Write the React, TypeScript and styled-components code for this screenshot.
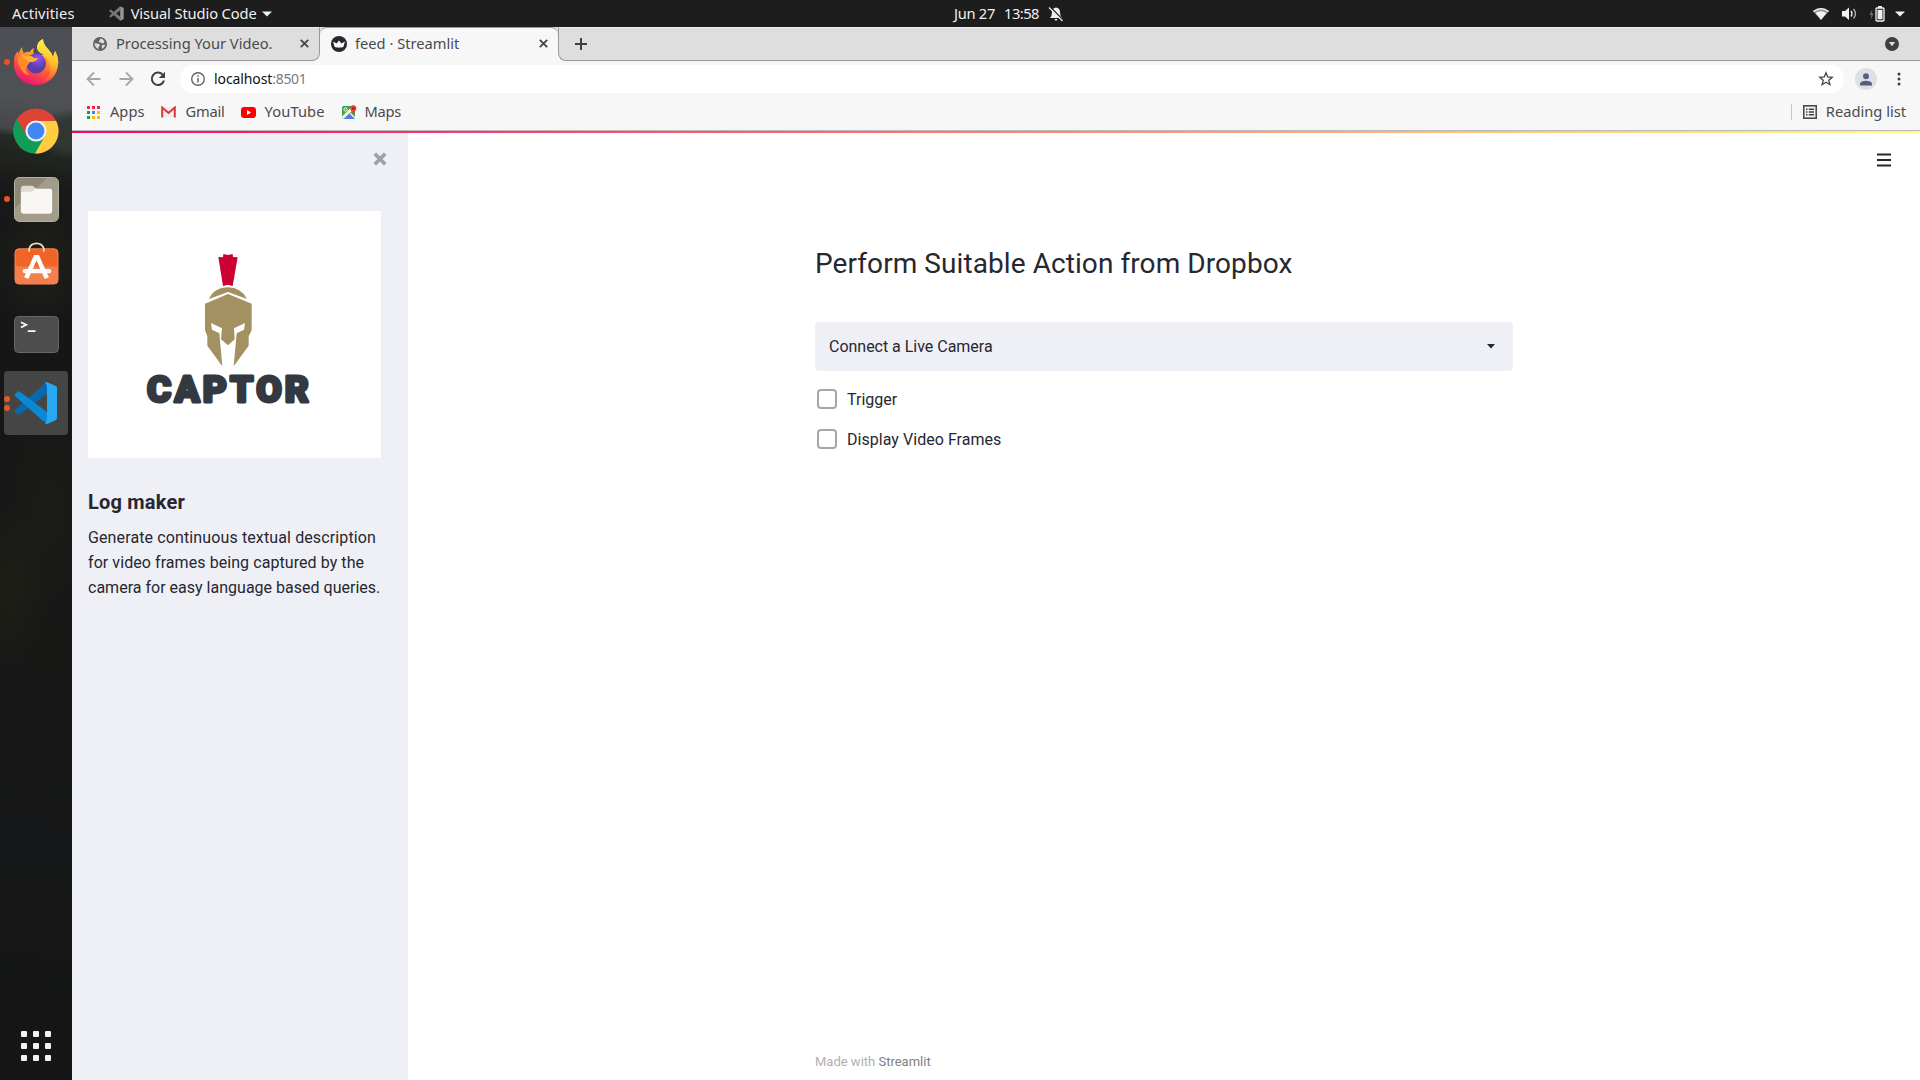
import React from "react";
import styled, { createGlobalStyle } from "styled-components";

const ubuntu = `"Noto Sans", "Open Sans", sans-serif`;
const plex = `Roboto, "Noto Sans", sans-serif`;

const Global = createGlobalStyle`
  * { box-sizing: border-box; }
  html, body { margin: 0; padding: 0; overflow: hidden; }
  svg { display: block; flex: none; }
`;

const Desktop = styled.div`
  width: 1920px; height: 1080px; display: flex; flex-direction: column;
  background: #1d1d1d; font-family: ${ubuntu}; font-size: 14.67px;
`;
const Label = styled.span<{ $ls?: number; $gap?: number }>`
  letter-spacing: ${(p) => p.$ls ?? 0}px;
  margin-left: ${(p) => p.$gap ?? 0}px;
  white-space: pre;
`;
const Spacer = styled.div`flex: 1;`;

/* ---- system bar ---- */
const TopBar = styled.header`
  height: 27px; flex: none; display: grid; grid-template-columns: 954px 1fr auto; align-items: center;
  background: #1d1d1d; color: #f0f0f0; line-height: 27px;
`;
const TopLeft = styled.div`display: flex; align-items: center; padding-left: 12px;`;
const TopCenter = styled.div`display: flex; align-items: center;`;
const TopRight = styled.div`display: flex; align-items: center; padding-right: 15px;`;
const TopIcon = styled.div<{ $gap: number }>`margin-left: ${(p) => p.$gap}px;`;

const Body = styled.div`flex: 1; display: flex; min-height: 0;`;

/* ---- dock ---- */
const Dock = styled.nav`
  width: 72px; flex: none; display: flex; flex-direction: column; align-items: stretch;
  background:
    radial-gradient(ellipse 40px 26px at 74px 107px, #303730 0 55%, transparent 100%),
    radial-gradient(ellipse 50px 60px at 40px 240px, rgba(40, 42, 28, .55), transparent),
    radial-gradient(ellipse 40px 90px at 10px 560px, rgba(34, 36, 22, .6), transparent),
    radial-gradient(ellipse 50px 120px at 50px 480px, rgba(32, 34, 22, .5), transparent),
    linear-gradient(187deg, #4b4e54 0, #505154 75px, #46474a 108px, #242a25 116px, #20231f 138px, #191919 165px, #161616 250px, #171716 600px, #171819 760px, #151515 100%);
`;
const DockItem = styled.div<{ $h: number }>`
  height: ${(p) => p.$h}px; flex: none; display: grid; grid-template-columns: 4px 6px 1fr 4px; align-items: center;
  & > svg { justify-self: center; margin-right: 6px; }
`;
const Running = styled.span`display: flex; flex-direction: column; gap: 3px; grid-column: 2; width: 6px; align-self: center;`;
const Dot = styled.i`width: 6px; height: 6px; border-radius: 50%; background: #e95420;`;
const ActiveTile = styled.div`
  width: 64px; height: 64px; margin: -4px 4px 0; flex: none; border-radius: 4px; background: #454545;
  display: flex; align-items: center;
  & > svg { margin-left: 4px; }
`;
const AppGrid = styled.div`
  margin: auto 0 19px 21px; display: grid; grid-template-columns: repeat(3, 6px); gap: 6px;
  & > i { width: 6px; height: 6px; border-radius: 1px; background: #f1f1ef; }
`;

/* ---- browser ---- */
const Browser = styled.section`flex: 1; display: flex; flex-direction: column; background: #fff; color: #3c4043;`;
const TabStrip = styled.div`
  height: 34px; flex: none; display: flex; align-items: stretch; background: #f7f7f7; color: #494b4d; line-height: 28px;
  & span { padding-bottom: 2px; }
`;
const StripBack = styled.div<{ $w?: number; $side: "left" | "right" }>`
  ${(p) => (p.$w ? `width: ${p.$w}px;` : "flex: 1;")}
  display: flex; align-items: center; background: #dedede; border-bottom: 1px solid #999; border-top: 1px solid #ececec;
  ${(p) => (p.$side === "left" ? "border-bottom-right-radius: 8px; border-right: 1px solid #999; padding: 0 10px 1px 21px;" : "border-bottom-left-radius: 8px; border-left: 1px solid #999; padding: 0 21px 0 16px;")}
`;
const ActiveTab = styled.div`
  width: 238px; display: flex; align-items: center; background: #f7f7f7; border-top: 1px solid #999; padding: 0 10px 2px 11px;
  border-radius: 7px 7px 0 0;
`;
const StripCorner = styled.div`display: flex; background: #f7f7f7;`;
const TabWell = styled.div`display: flex; background: linear-gradient(#dedede 0 50%, #f7f7f7 50%);`;
const Toolbar = styled.div`
  height: 36px; flex: none; display: flex; align-items: center; background: #f7f7f7; padding: 0 19px 0 14px;
`;
const ToolIcons = styled.div`display: flex; gap: 16px; align-items: center; width: 80px;`;
const Address = styled.div`
  flex: 1; height: 28px; margin-left: 14px; border-radius: 14px; background: #fff; display: flex; align-items: center;
  padding: 0 10px 0 11px; font-size: 14px; line-height: 28px; color: #777b80;
  & b { font-weight: 400; color: #111; }
`;
const Avatar = styled.div`
  width: 22px; height: 22px; margin-left: 11px; border-radius: 50%; background: #dee0e6; display: flex; align-items: center; justify-content: center;
`;
const Bookmarks = styled.div`
  height: 34px; flex: none; display: flex; align-items: center; background: #f7f7f7; border-bottom: 1px solid #b9b9b9;
  padding: 0 14px 3px 15px; color: #494b4d; line-height: 28px;
  & > span { padding-bottom: 2px; }
`;
const Rule = styled.div`width: 1px; height: 16px; background: #c5c5c5; margin-right: 11px;`;
const Decoration = styled.div`height: 2px; flex: none; background: linear-gradient(90deg, #ff0068, #fffd80);`;

/* ---- page ---- */
const Page = styled.div`flex: 1; display: flex; min-height: 0; font-family: ${plex}; font-size: 16px; color: #262730;`;
const Sidebar = styled.aside`width: 336px; flex: none; background: #eff0f6; padding: 19px 27px 0 16px; display: flex; flex-direction: column;`;
const CloseRow = styled.div`height: 59px; display: flex; justify-content: flex-end; margin-right: -6px;`;
const LogoCard = styled.div`width: 293px; height: 247px; background: #fff;`;
const SideTitle = styled.h2`margin: 30px 0 0; font-size: 20px; line-height: 28px; font-weight: 700; letter-spacing: .2px;`;
const SideText = styled.p`margin: 9px 0 0; line-height: 25px;`;
const Line = styled.span<{ $ls: number }>`display: block; white-space: nowrap; letter-spacing: ${(p) => p.$ls}px;`;
const Main = styled.main`flex: 1; display: grid; grid-template-columns: 407px 698px 1fr;`;
const Content = styled.div`grid-column: 2; display: flex; flex-direction: column; padding-top: 111px;`;
const Heading = styled.h1`margin: 0; font-size: 28px; line-height: 40px; font-weight: 400; letter-spacing: .08px;`;
const Select = styled.div`
  height: 49px; margin: 38px 0 8px; border-radius: 4px; background: #eff0f6; display: flex; align-items: center; justify-content: space-between;
  padding: 0 18px 0 14px;
`;
const Check = styled.label`height: 40px; display: flex; align-items: center; gap: 10px; padding-left: 2px;`;
const Box = styled.span`width: 20px; height: 20px; border: 2px solid #a5a5aa; border-radius: 4px; background: #fff;`;
const Footer = styled.footer`margin-top: auto; height: 37px; line-height: 38px; font-size: 13px; color: #b0b0b3; & b { font-weight: 400; color: #7e7e83; }`;
const MenuCell = styled.div`display: flex; justify-content: flex-end; padding: 20px 29px 0 0;`;

const VSGlyph = ({ size, gray }: { size: number; gray?: boolean }) => (
  <svg width={size} height={size} viewBox="0 0 44 44">
    <path d="M1 31 L4 33.500 Q5 34 6 33.200 L33 13 V2 L29 4 L1.500 28.500 Q.3 30 1 31Z" fill={gray ? "#777" : "#0868ae"} />
    <path d="M1 13 L4 10.500 Q5 10 6 10.800 L33 31 V42 L29 40 L1.500 15.500 Q.3 14 1 13Z" fill={gray ? "#777" : "#0b88d4"} />
    <path d="M31 1.500 Q32 .8 33 1.300 L42 5 Q43 5.500 43 7 V37 Q43 38.500 42 39 L33 43 Q32 43.400 31 42.500 Q33 41 33 38 V6 Q33 3 31 1.500Z" fill={gray ? "#999" : "#29a8f2"} />
  </svg>
);
const Firefox = () => (
  <svg width="46" height="48" viewBox="0 0 46 48">
    <defs>
      <linearGradient id="ff1" x1=".75" y1="0" x2=".3" y2="1"><stop offset="0" stopColor="#fff44f" /><stop offset=".32" stopColor="#ffb52b" /><stop offset=".62" stopColor="#ff5a36" /><stop offset="1" stopColor="#e9107a" /></linearGradient>
      <linearGradient id="ff3" x1=".7" y1="0" x2=".6" y2="1"><stop offset="0" stopColor="#fff550" /><stop offset=".55" stopColor="#ffc22c" /><stop offset="1" stopColor="#ff5636" /></linearGradient>
      <radialGradient id="ff2" cx=".6" cy=".25"><stop offset="0" stopColor="#9752ff" /><stop offset="1" stopColor="#583fa5" /></radialGradient>
    </defs>
    <path d="M9 9 Q9 13 11 15 Q14 13 17 14 Q18 11 21 10 Q19 15 22 17 L31 17 Q24 13 25 6 Q26 3 30 1 Q30 6 35 11 Q39 15 40 19 L42 13 Q46 20 45 27 C44 39 35 47 23 47 C10 47 1 38 1 26 Q0 18 5 13 V16 Q7 12 9 9Z" fill="url(#ff1)" />
    <path d="M24 8 Q25 3 30 1 Q30 6 35 11 Q39 15 40 19 L42 13 Q46 20 45 27 Q43 40 31 43 Q39 37 37 27 Q36 21 31 17 Q23 14 24 8Z" fill="url(#ff3)" />
    <circle cx="23" cy="25.500" r="10" fill="url(#ff2)" />
    <path d="M5 19 Q10 15 17 18 Q19 20 25 20 Q23 24 17 24 Q14 27 13 31 Q13 35 17 37 Q11 37 8 31 Q4 25 5 19Z" fill="#ff8a2a" />
    <path d="M8 16 Q13 19 19 18 Q20 21 25 20.500 Q23 24 17 24 Q11 22 8 16Z" fill="#ffb52d" />
  </svg>
);
const Chrome = () => (
  <svg width="46" height="46" viewBox="0 0 48 48">
    <circle cx="24" cy="24" r="23.500" fill="#db4437" />
    <path d="M24 24 L14.500 29.500 L4 11.500 A23.500 23.500 0 0 0 23 47.500 L34 29Z" fill="#0f9d58" />
    <path d="M24 13.500 H45 A23.500 23.500 0 0 1 23 47.500 L33.500 29Z" fill="#ffcd40" />
    <circle cx="24" cy="24" r="11" fill="#f1f1f1" /><circle cx="24" cy="24" r="8.800" fill="#4285f4" />
  </svg>
);
const Files = () => (
  <svg width="45" height="45" viewBox="0 0 46 46">
    <rect x=".5" y=".5" width="45" height="45" rx="5" fill="#8f8775" stroke="#b9b3a3" /><path d="M1 32 L34 1 H41 Q45 1 45 5 V41 Q45 45 41 45 H5 Q1 45 1 41Z" fill="#a39c8a" />
    <path d="M7 12 Q7 9 10 9 H19 L23 12 V17 H7Z" fill="#dedace" /><path d="M7 17 Q7 15 9 15 H18 L22 12 H37 Q39 12 39 14 V35 Q39 37.500 36.500 37.500 H9.500 Q7 37.500 7 35Z" fill="#f8f7f4" />
  </svg>
);
const Software = () => (
  <svg width="45" height="43" viewBox="0 0 46 44">
    <path d="M1 11 Q1 7 5 7 H41 Q45 7 45 11 V39 Q45 43 41 43 H5 Q1 43 1 39Z" fill="#f06428" stroke="#f58a5b" /><path d="M1 25 H45 V39 Q45 43 41 43 H5 Q1 43 1 39Z" fill="#f47f4d" />
    <path d="M15.500 10 V7 Q17 1.500 23 1.500 Q29 1.500 30.500 7 V10" fill="none" stroke="#f3dfb6" strokeWidth="1.800" />
    <path d="M12.500 37 L22 15.500 H24 L33.500 37" fill="none" stroke="#fff" strokeWidth="4.600" /><rect x="9" y="27.500" width="29" height="4.500" rx="2" fill="#fff" />
  </svg>
);
const Terminal = () => (
  <svg width="45" height="37" viewBox="0 0 46 38">
    <rect x=".5" y=".5" width="45" height="37" rx="4" fill="#4d4d4d" stroke="#6a6a6a" /><path d="M7 6.500 L12.500 9 L7 11.800 M14 15.500 H22" fill="none" stroke="#fff" strokeWidth="1.700" />
  </svg>
);
const CloseX = () => <svg width="9" height="9" viewBox="0 0 9 9"><path d="M.8 .8 L8.200 8.200 M8.200 .8 L.8 8.200" stroke="#444" strokeWidth="1.800" /></svg>;
const Globe = () => (
  <svg width="14" height="14" viewBox="0 0 14 14"><circle cx="7" cy="7" r="7" fill="#5f6368" /><path d="M1.600 6 Q3.500 6.800 5.500 6.800 Q7.200 7 6.800 9 L5.500 9.500 V12 Q1.800 11 1.600 6Z M7 1.600 Q10 1.700 11.500 4.200 L10.500 6.200 Q9 7 8.200 5.800 L5.800 5 Q5.500 3.500 7 3.300Z M8.800 8.300 L12.200 7.500 Q12 10.500 9 12Z" fill="#dedede" /></svg>
);
const Crown = () => (
  <svg width="16" height="16" viewBox="0 0 16 16"><circle cx="8" cy="8" r="8" fill="#262730" /><path d="M2 5.500 L5.600 7.500 L8 4.500 L10.400 7.500 L14 5.500 L12.300 11 Q8 12 3.700 11Z" fill="#fff" /></svg>
);
const Arrow = ({ flip }: { flip?: boolean }) => (
  <svg width="16" height="16" viewBox="0 0 16 16"><path d={flip ? "M1.500 8 H14 M8 1.500 L14.500 8 L8 14.500" : "M14.500 8 H2 M8 1.500 L1.500 8 L8 14.500"} fill="none" stroke="#a7a7a7" strokeWidth="1.800" /></svg>
);
const Reload = () => (
  <svg width="16" height="16" viewBox="0 0 16 16"><path d="M12.600 3.600 A6.200 6.200 0 1 0 14 9.500" fill="none" stroke="#3c4043" strokeWidth="2" /><path d="M15 .8 V7 H8.800Z" fill="#3c4043" /></svg>
);
const LogoArt = () => (
  <svg width="293" height="247" viewBox="0 0 879 741">
    <path d="M391 138 L405 139 L406 129 L420 132 L434 129 L435 138 L449 139 L434 225 L420 221 L405 225Z" fill="#cc0033" />
    <path d="M363 264 Q379 229 420 229 Q460 230 477 264 L420 243Z" fill="#a39161" />
    <path d="M420 249 L491 278 V358 L482 376 L482 404 L437 466 L446 367 L468 356 L471 336 L438 352 L440 385 L420 403 L399 385 L402 352 L369 336 L372 356 L394 367 L403 466 L358 404 V376 L351 358 V278Z" fill="#a39161" />
    <text x="177" y="574" fontFamily="Roboto, sans-serif" fontWeight="900" fontSize="111" fill="#343840" stroke="#343840" strokeWidth="9" strokeLinejoin="round" textLength="486" lengthAdjust="spacing">CAPTOR</text>
  </svg>
);

export default function App() {
  return (
    <Desktop>
      <Global />
      <TopBar>
        <TopLeft>
          <Label $ls={0.16}>Activities</Label>
          <TopIcon $gap={34}><VSGlyph size={15} gray /></TopIcon>
          <Label $gap={7} $ls={-0.1}>Visual Studio Code</Label>
          <TopIcon $gap={5}><svg width="10" height="6"><path d="M0 .5 H10 L5 5.500Z" fill="#f2f2f2" /></svg></TopIcon>
        </TopLeft>
        <TopCenter>
          <Label $ls={-0.28}>Jun 27</Label>
          <Label $gap={9} $ls={-0.5}>13:58</Label>
          <TopIcon $gap={9}>
            <svg width="16" height="16" viewBox="0 0 16 16"><path d="M2 12 Q4 10 4 6 Q4 2 8 1.500 Q12 2 12 6 Q12 10 14 12Z M6.500 13 H9.500 Q9 14.700 8 14.700 Q7 14.700 6.500 13Z" fill="#eee" /><path d="M2 .8 L16 15" stroke="#1d1d1d" strokeWidth="1.500" /><path d="M1 1.500 L14.500 15" stroke="#eee" strokeWidth="1.200" /></svg>
          </TopIcon>
        </TopCenter>
        <TopRight>
          <TopIcon $gap={0}><svg width="16" height="12" viewBox="0 0 16 12"><path d="M0 3 Q8 -3 16 3 L8 12Z" fill="#999" /><path d="M0 3 Q8 -3 16 3 L15.200 4 Q8 -1.500 .8 4Z" fill="#f2f2f2" /><path d="M2.500 5 Q8 1.500 13.500 5 L8 11.700Z" fill="#f2f2f2" /></svg></TopIcon>
          <TopIcon $gap={13}><svg width="15" height="14" viewBox="0 0 15 14"><path d="M0 4 H3 L7 .5 V13 L3 9.500 H0Z" fill="#f2f2f2" /><path d="M9 4 Q11 6.800 9 9.500" fill="none" stroke="#f2f2f2" strokeWidth="1.300" /><path d="M11.500 2 Q15.500 6.800 11.500 11.500" fill="none" stroke="#bbb" strokeWidth="1.300" /></svg></TopIcon>
          <TopIcon $gap={12}><svg width="16" height="16" viewBox="0 0 16 16"><path d="M3.500 3 L.5 9 H2.500 L1.500 14 L4.500 7.500 H2.500Z" fill="#777" /><rect x="7" y="2" width="8" height="13" rx="1" fill="none" stroke="#f2f2f2" strokeWidth="1.300" /><rect x="8.500" y="3.800" width="5" height="9.500" fill="#eee" /><rect x="9" y="0" width="4" height="2" fill="#eee" /></svg></TopIcon>
          <TopIcon $gap={10}><svg width="10" height="6"><path d="M0 .5 H10 L5 5.500Z" fill="#f2f2f2" /></svg></TopIcon>
        </TopRight>
      </TopBar>
      <Body>
        <Dock>
          <DockItem $h={70}><Running><Dot /></Running><Firefox /></DockItem>
          <DockItem $h={68}><Running /><Chrome /></DockItem>
          <DockItem $h={68}><Running><Dot /></Running><Files /></DockItem>
          <DockItem $h={61}><Running /><Software /></DockItem>
          <DockItem $h={81}><Running /><Terminal /></DockItem>
          <ActiveTile><Running><Dot /><Dot /></Running><VSGlyph size={44} /></ActiveTile>
          <AppGrid>{Array.from({ length: 9 }, (_, i) => <i key={i} />)}</AppGrid>
        </Dock>
        <Browser>
          <TabStrip>
            <StripCorner>
              <StripBack $w={248} $side="left">
                <Globe /><Label $gap={9}>Processing Your Video.</Label><Spacer /><CloseX />
              </StripBack>
            </StripCorner>
            <TabWell><ActiveTab><Crown /><Label $gap={8}>feed · Streamlit</Label><Spacer /><CloseX /></ActiveTab></TabWell>
            <StripBack $side="right">
              <svg width="12" height="12"><path d="M6 0 V12 M0 6 H12" stroke="#3c4043" strokeWidth="2" /></svg>
              <Spacer />
              <svg width="14" height="14" viewBox="0 0 14 14"><circle cx="7" cy="7" r="7" fill="#3c4043" /><path d="M3.800 5 H10.200 L7 9.300Z" fill="#dedede" /></svg>
            </StripBack>
          </TabStrip>
          <Toolbar>
            <ToolIcons><Arrow /><Arrow flip /><Reload /></ToolIcons>
            <Address>
              <svg width="14" height="14" viewBox="0 0 14 14"><circle cx="7" cy="7" r="6.300" fill="none" stroke="#5f6368" strokeWidth="1.400" /><path d="M7 6 V10.500 M7 3.300 V4.800" stroke="#5f6368" strokeWidth="1.500" /></svg>
              <Label $gap={9} $ls={-0.1}><b>localhost</b></Label><Label $ls={-0.3}>:8501</Label>
              <Spacer />
              <svg width="16" height="16" viewBox="0 0 16 16"><path d="M8 1.800 L9.700 6 L14.200 6.300 L10.800 9.200 L11.900 13.700 L8 11.200 L4.100 13.700 L5.200 9.200 L1.800 6.300 L6.300 6Z" fill="none" stroke="#444" strokeWidth="1.300" /></svg>
            </Address>
            <Avatar><svg width="12" height="13" viewBox="0 0 12 13"><circle cx="6" cy="3.300" r="3" fill="#565f7d" /><path d="M0 12.500 V10.500 Q1 7.800 6 7.800 Q11 7.800 12 10.500 V12.500Z" fill="#565f7d" /></svg></Avatar>
            <TopIcon $gap={20}><svg width="4" height="14" viewBox="0 0 4 14"><circle cx="2" cy="2" r="1.500" fill="#3c4043" /><circle cx="2" cy="7" r="1.500" fill="#3c4043" /><circle cx="2" cy="12" r="1.500" fill="#3c4043" /></svg></TopIcon>
          </Toolbar>
          <Bookmarks>
            <svg width="13" height="13" viewBox="0 0 13 13">{["#ee2a35", "#ee2a35", "#ee2a35", "#0f9d58", "#4285f4", "#fbbc05", "#0f9d58", "#fbbc05", "#fbbc05"].map((c, i) => <rect key={i} x={(i % 3) * 5} y={Math.floor(i / 3) * 5} width="3" height="3" fill={c} />)}</svg>
            <Label $gap={10}>Apps</Label>
            <TopIcon $gap={17}><svg width="15" height="12" viewBox="0 0 15 12"><path d="M1 1 H14 V11.500 H1Z" fill="#eee" /><path d="M1.200 11.500 V1.500 L7.500 7 L13.800 1.500 V11.500" fill="none" stroke="#d93a35" strokeWidth="2" /></svg></TopIcon>
            <Label $gap={9} $ls={-0.2}>Gmail</Label>
            <TopIcon $gap={16}><svg width="15" height="11" viewBox="0 0 15 11"><rect width="15" height="11" rx="3" fill="#f00" /><path d="M6 3 L10 5.500 L6 8Z" fill="#fff" /></svg></TopIcon>
            <Label $gap={9} $ls={0.1}>YouTube</Label>
            <TopIcon $gap={17}><svg width="15" height="15" viewBox="0 0 15 15"><rect y="1" width="13" height="13" rx="1.500" fill="#34a853" /><path d="M1 14 L7 8 L13 14Z" fill="#5678f5" /><path d="M0 11.500 L10.500 1 L13 3 L1.500 14 L0 13Z" fill="#fff3c5" /><path d="M9 8 L13 12 V14 L7.500 8.500Z" fill="#eee" /><circle cx="3.500" cy="4.500" r="1.600" fill="none" stroke="#fff" /><path d="M11.300 10 Q10.500 7 8.600 5 Q7 1 11.300 0 Q15.500 1 14 5 Q12 7 11.300 10Z" fill="#ea4335" /><circle cx="11.300" cy="3.500" r="1.200" fill="#8f1d18" /></svg></TopIcon>
            <Label $gap={8} $ls={-0.3}>Maps</Label>
            <Spacer />
            <Rule />
            <svg width="14" height="14" viewBox="0 0 14 14"><rect x=".8" y=".8" width="12.400" height="12.400" fill="none" stroke="#3c4043" strokeWidth="1.500" /><path d="M3 4.300 H4.500 M3 7 H4.500 M3 9.700 H4.500 M5.800 4.300 H11 M5.800 7 H11 M5.800 9.700 H11" stroke="#3c4043" strokeWidth="1.400" /></svg>
            <Label $gap={9}>Reading list</Label>
          </Bookmarks>
          <Decoration />
          <Page>
            <Sidebar>
              <CloseRow><svg width="14" height="14" viewBox="0 0 14 14"><path d="M1.800 1.800 L12.200 12.200 M12.200 1.800 L1.800 12.200" stroke="#a0a1a6" strokeWidth="3.700" /></svg></CloseRow>
              <LogoCard><LogoArt /></LogoCard>
              <SideTitle>Log maker</SideTitle>
              <SideText>
                <Line $ls={0.12}>Generate continuous textual description</Line>
                <Line $ls={0.07}>for video frames being captured by the</Line>
                <Line $ls={0.01}>camera for easy language based queries.</Line>
              </SideText>
            </Sidebar>
            <Main>
              <Content>
                <Heading>Perform Suitable Action from Dropbox</Heading>
                <Select><Label $ls={-0.02}>Connect a Live Camera</Label><svg width="8" height="5"><path d="M0 0 H8 L4 4.500Z" fill="#262730" /></svg></Select>
                <Check><Box /><Label>Trigger</Label></Check>
                <Check><Box /><Label $ls={0.04}>Display Video Frames</Label></Check>
                <Footer>Made with <b>Streamlit</b></Footer>
              </Content>
              <MenuCell><svg width="14" height="14" viewBox="0 0 14 14"><path d="M0 1.500 H14 M0 7 H14 M0 12.500 H14" stroke="#262730" strokeWidth="1.800" /></svg></MenuCell>
            </Main>
          </Page>
        </Browser>
      </Body>
    </Desktop>
  );
}
